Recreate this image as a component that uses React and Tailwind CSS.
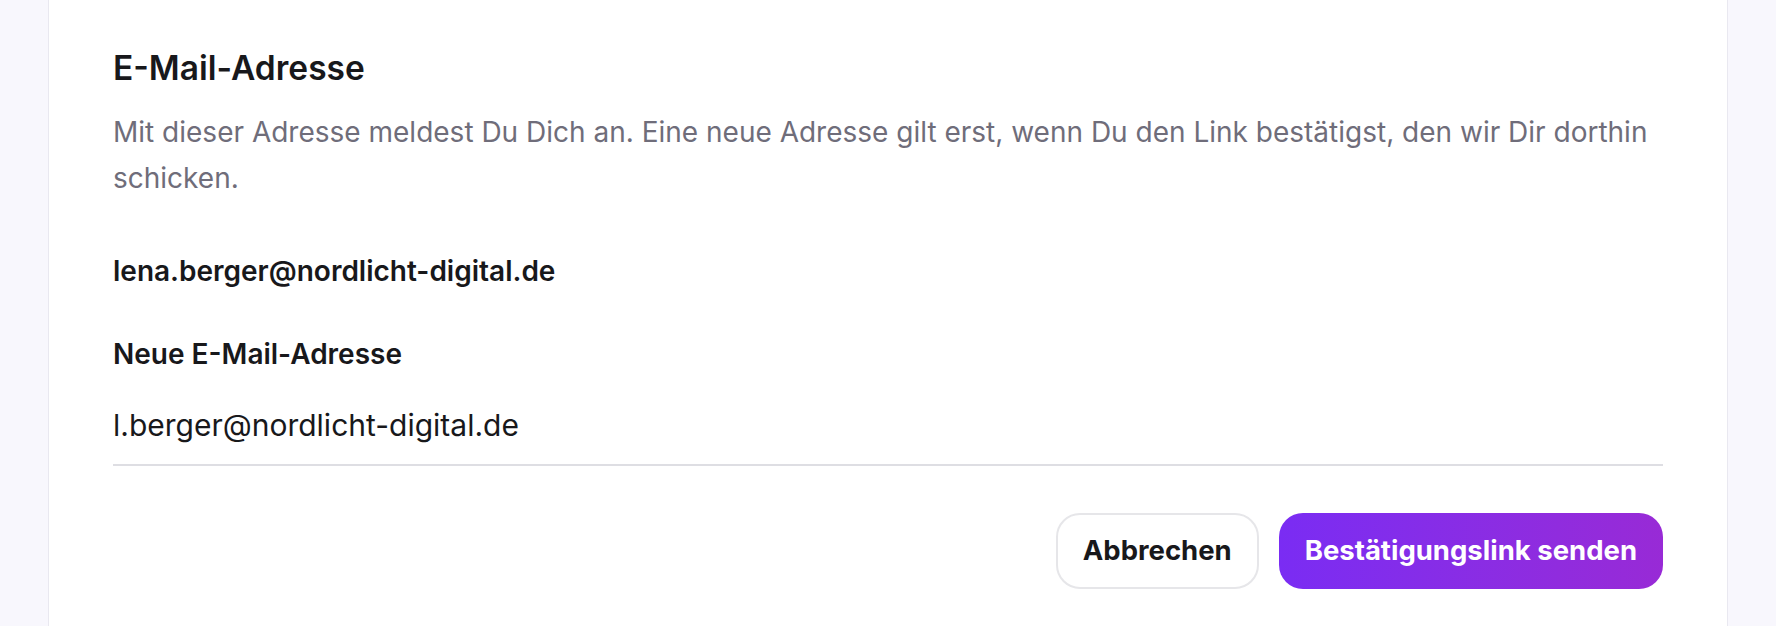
import React from 'react';

const EmailSettings = () => {
  return (
    <div className="bg-white border-x border-[#e9e8f0] px-16 pt-12 pb-16">
      <h2 className="text-[33.5px] leading-[40px] font-semibold text-[#18181b]">E-Mail-Adresse</h2>
      <p className="mt-[21px] text-[28px] leading-[46px] text-[#6f6d7a]">
        Mit dieser Adresse meldest Du Dich an. Eine neue Adresse gilt erst, wenn Du den Link bestätigst, den wir Dir dorthin schicken.
      </p>

      {/* Current address */}
      <div className="mt-[53px] text-[28px] leading-[34px] font-semibold text-[#18181b]">
        lena.berger@nordlicht-digital.de
      </div>

      {/* New address */}
      <label className="block mt-[49px] text-[28px] leading-[34px] font-semibold text-[#18181b]">
        Neue E-Mail-Adresse
      </label>
      <input
        type="email"
        defaultValue="l.berger@nordlicht-digital.de"
        className="mt-[35px] block w-full pb-[20px] text-[30px] leading-[38px] text-[#18181b] border-b-2 border-[#dedee3] outline-none bg-transparent"
      />

      {/* Actions */}
      <div className="mt-[47px] flex justify-end gap-[20px]">
        <button className="h-[76px] px-[25px] rounded-[24px] border-2 border-[#e6e6e9] bg-white text-[27.5px] font-bold text-[#18181b]">
          Abbrechen
        </button>
        <button className="h-[76px] px-[26px] rounded-[24px] bg-gradient-to-r from-[#7a2cf3] to-[#982ad6] text-[27.5px] font-bold text-white">
          Bestätigungslink senden
        </button>
      </div>
    </div>
  );
};

export default function App() {
  return (
    <div className="h-[626px] overflow-hidden bg-[#f8f7fd] px-12" style={{ fontFamily: 'Inter, "Noto Sans", sans-serif' }}>
      <EmailSettings />
    </div>
  );
}
